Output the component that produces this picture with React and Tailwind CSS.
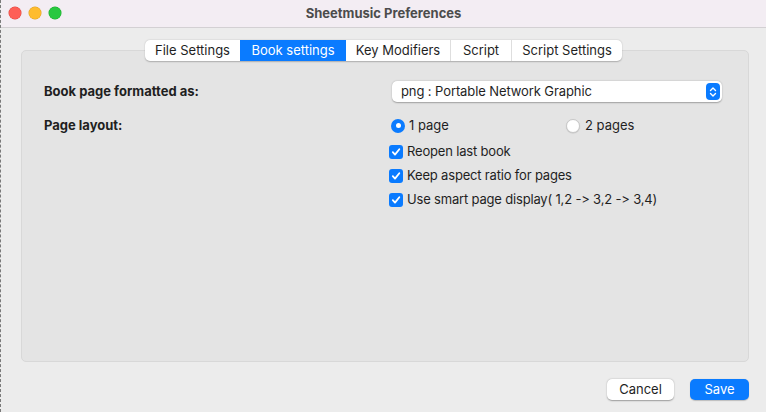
const font = { fontFamily: 'Inter, "Liberation Sans", sans-serif' };

function Check() {
  return (
    <span className="flex h-[14px] w-[14px] items-center justify-center rounded-[3px] bg-[#0a7bff]">
      <svg width="10" height="10" viewBox="0 0 10 10" fill="none">
        <path d="M1.8 5.2 L4 7.6 L8.3 2.2" stroke="white" strokeWidth="1.8" strokeLinecap="round" strokeLinejoin="round" />
      </svg>
    </span>
  );
}

function Radio({ on }) {
  return on ? (
    <span className="flex h-[14px] w-[14px] items-center justify-center rounded-full bg-[#0a7bff]">
      <span className="h-[5px] w-[5px] rounded-full bg-white" />
    </span>
  ) : (
    <span className="h-[14px] w-[14px] rounded-full border border-[#c8c8c8] bg-white shadow-[0_0.5px_1px_rgba(0,0,0,0.15)]" />
  );
}

const tabs = [
  { label: 'File Settings', w: 'w-[95px]' },
  { label: 'Book settings', w: 'w-[106px]', active: true },
  { label: 'Key Modifiers', w: 'w-[104px]' },
  { label: 'Script', w: 'w-[61px] border-l border-[#dedede]' },
  { label: 'Script Settings', w: 'w-[111px] border-l border-[#dedede]' },
];

export default function App() {
  return (
    <div
      className="flex h-[412px] w-[766px] flex-col overflow-hidden border-l border-dashed border-[#7a7a7a] bg-[#ececec] text-[13px] text-[#1f1f1f] [font-feature-settings:'calt'_0,'liga'_0]"
      style={font}
    >
      {/* title bar */}
      <div className="relative flex h-[28px] shrink-0 items-center justify-center border-b border-[#d3d0d3] bg-[#f3edf3]">
        <div className="absolute left-[8px] top-[7px] flex gap-[8px]">
          <span className="h-[12px] w-[12px] rounded-full bg-[#fe5f57] ring-[0.5px] ring-[#e0443e]" />
          <span className="h-[12px] w-[12px] rounded-full bg-[#febc2e] ring-[0.5px] ring-[#dea123]" />
          <span className="h-[12px] w-[12px] rounded-full bg-[#28c840] ring-[0.5px] ring-[#1aab29]" />
        </div>
        <span className="font-bold text-[#4c4c4c]">Sheetmusic Preferences</span>
      </div>

      {/* panel */}
      <div className="ml-[20px] mr-[17px] mt-[22px] flex h-[312px] flex-col rounded-[5px] border border-[#d8d8d8] bg-[#e4e4e4]">
        <div className="-mt-[11px] flex justify-center">
          <div className="-ml-[3px] flex h-[21px] items-stretch overflow-hidden rounded-[5px] bg-white shadow-[0_0.5px_1.5px_rgba(0,0,0,0.25)]">
            {tabs.map((t) => (
              <div
                key={t.label}
                className={
                  'flex items-center justify-center ' +
                  t.w +
                  (t.active ? ' bg-[#0a7bff] text-white' : '')
                }
              >
                {t.label}
              </div>
            ))}
          </div>
        </div>

        <div className="flex flex-col pl-[22px] pr-[26px] pt-[20px]">
          <div className="flex items-center">
            <span className="w-[348px] font-bold">Book page formatted as:</span>
            <div className="flex h-[21px] flex-1 items-center justify-between rounded-[5px] bg-white pl-[9px] pr-[2px] shadow-[0_0.5px_1.5px_rgba(0,0,0,0.3)]">
              <span className="tracking-[-0.1px]">png : Portable Network Graphic</span>
              <span className="flex h-[17px] w-[14px] flex-col items-center justify-center rounded-[4px] bg-[#0a7bff]">
                <svg width="8" height="12" viewBox="0 0 8 12" fill="none">
                  <path d="M1.5 4.5 L4 2 L6.5 4.5 M1.5 7.5 L4 10 L6.5 7.5" stroke="white" strokeWidth="1.4" strokeLinecap="round" strokeLinejoin="round" />
                </svg>
              </span>
            </div>
          </div>

          <div className="mt-[14px] flex items-center">
            <span className="w-[347px] font-bold">Page layout:</span>
            <div className="flex w-[175px] items-center gap-[4px]">
              <Radio on />
              <span>1 page</span>
            </div>
            <div className="flex items-center gap-[5px]">
              <Radio />
              <span>2 pages</span>
            </div>
          </div>

          <div className="ml-[345px] mt-[7px] flex flex-col gap-[6px]">
            {['Reopen last book', 'Keep aspect ratio for pages', 'Use smart page display( 1,2 -> 3,2 -> 3,4)'].map((t) => (
              <div key={t} className="flex h-[18px] items-center gap-[4px]">
                <Check />
                <span className="tracking-[-0.18px]">{t}</span>
              </div>
            ))}
          </div>
        </div>
      </div>

      {/* buttons */}
      <div className="mr-[17px] mt-[17px] flex justify-end gap-[16px]">
        <button className="h-[21px] w-[67px] rounded-[5px] bg-white text-[13px] text-[#1f1f1f] shadow-[0_0.5px_1.5px_rgba(0,0,0,0.35)]">
          Cancel
        </button>
        <button className="h-[21px] w-[59px] rounded-[5px] bg-[#0a7bff] text-[13px] text-white shadow-[0_0.5px_1px_rgba(0,0,0,0.2)]">
          Save
        </button>
      </div>
    </div>
  );
}
